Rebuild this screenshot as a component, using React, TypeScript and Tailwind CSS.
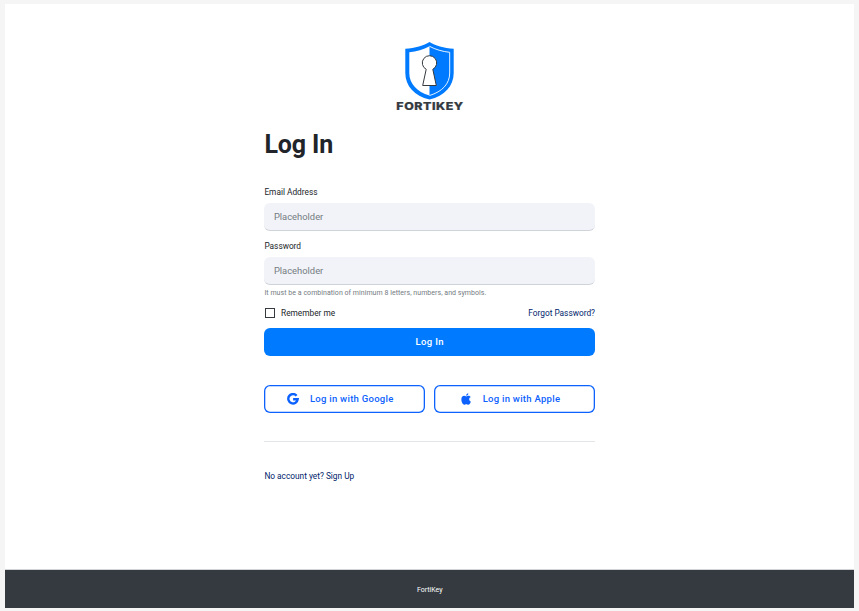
import React from "react";

function Logo() {
  return (
    <svg width="70" height="72" viewBox="0 0 70 72" role="img" aria-label="FORTIKEY">
      <path d="M34.5 2C29 5.5 20 8.2 10.3 8.8V33C10.3 46 19.5 55.8 34.5 59.6C49.500 55.800 58.700 46 58.700 33V8.800C49 8.200 40 5.500 34.500 2Z" fill="#007bff" />
      <path d="M34.500 6.300C28.500 9.500 21.500 11.600 14.300 12.300V33C14.300 43.800 21.800 51.700 34.500 55.500Z" fill="#fff" />
      <path d="M34.500 6.300C40.500 9.500 47.500 11.600 54.700 12.300V33C54.700 43.800 47.200 51.700 34.500 55.500" fill="none" stroke="#fff" strokeWidth="0.9" />
      <path d="M31.200 29.300A7.200 7.200 0 1 1 37.800 29.300L41.300 45.500H27.700Z" fill="#fff" stroke="#343a40" strokeWidth="1" />
      <text x="1.200" y="70" transform="scale(1.15 1)" textLength="58" lengthAdjust="spacing" fill="#343a40" stroke="#343a40" strokeWidth="0.25" className="font-['Inter',sans-serif] text-[10.800px] font-extrabold">FORTIKEY</text>
    </svg>
  );
}

function GoogleIcon() {
  return (
    <svg width="12" height="12" viewBox="0 0 12 12" fill="none" stroke="#0d62fe" strokeWidth="2.400">
      <path d="M9.600 2.700A4.700 4.700 0 1 0 10.700 6.200H6.100" />
    </svg>
  );
}

function AppleIcon() {
  return (
    <svg width="10.500" height="12" viewBox="0 0 11 13" fill="#0d62fe">
      <path d="M8.700 6.800c0-1.200.7-1.900 1.600-2.400C9.700 3.500 8.800 3.100 7.800 3.100c-1 0-1.700.6-2.300.6S4 3.100 3.200 3.100C1.500 3.100.2 4.600.2 7c0 2.600 1.600 5.600 3.200 5.600.8 0 1.200-.5 2.200-.5s1.300.5 2.100.5c1.300 0 2.300-1.700 2.800-3.200-1-.4-1.800-1.300-1.800-2.600Z" />
      <path d="M5.300 3C5.200 1.600 6.300.4 7.700.2 7.900 1.700 6.800 3 5.300 3Z" />
    </svg>
  );
}

function Field({ id, label, type }: { id: string; label: string; type: string }) {
  return (
    <div>
      <label htmlFor={id} className="block h-[17px] text-[8.300px] leading-[12px] text-[#212529]">{label}</label>
      <input id={id} type={type} placeholder="Placeholder" className="block h-7 w-full rounded-md border-b border-[#ced4da] bg-[#f1f3f8] px-[9.500px] pb-px text-[9.400px] outline-none placeholder:text-[#747b82]" />
    </div>
  );
}

export default function App() {
  return (
    <div className="flex h-[611px] w-[859px] flex-col bg-[#f5f5f5] pt-1 pr-[4.600px] pb-[3px] pl-[5px] font-['Roboto',sans-serif]">
      <main className="flex-1 bg-white pl-[259.400px]">
        <div className="flex w-[330.600px] flex-col">
          <div className="flex h-[123px] justify-center pt-9"><Logo /></div>
          <h1 className="h-[59px] text-[25px] leading-[36px] font-bold tracking-[-0.100px] text-[#212529]">Log In</h1>
          <Field id="email" label="Email Address" type="email" />
          <div className="h-[9px]" />
          <Field id="password" label="Password" type="password" />
          <p className="mt-[3px] h-[17px] text-[7px] leading-[10px] tracking-[0.040px] text-[#747b82]">It must be a combination of minimum 8 letters, numbers, and symbols.</p>
          <div className="flex h-[23px] items-start justify-between text-[8.300px] leading-[16px] text-[#212529]">
            <label className="flex items-center">
              <input type="checkbox" className="mr-[6.100px] ml-[0.600px] h-[10px] w-[10px] appearance-none border border-[#343a40]" />
              Remember me
            </label>
            <a href="#" className="text-[#001d6c]">Forgot Password?</a>
          </div>
          <button className="h-[28.400px] rounded-md bg-[#007bff] text-[9.500px] font-medium tracking-[0.350px] text-white">Log In</button>
          <div className="mt-[28.600px] grid grid-cols-2 gap-[9.500px] text-[9.500px] font-medium tracking-[0.270px] text-[#0d62fe]">
            <button className="flex h-7 items-center rounded-md pl-[23px] shadow-[inset_0_0_0_1.300px_#0d62fe]"><GoogleIcon /><span className="ml-[10.500px]">Log in with Google</span></button>
            <button className="flex h-7 items-center rounded-md pl-[26.700px] shadow-[inset_0_0_0_1.300px_#0d62fe]"><AppleIcon /><span className="ml-[11px]">Log in with Apple</span></button>
          </div>
          <div className="mt-7 border-t border-[#e3e5e8]" />
          <a href="#" className="mt-7 text-[8.300px] leading-[12px] text-[#001d6c]">No account yet? Sign Up</a>
        </div>
      </main>
      <footer className="flex h-[39px] shrink-0 items-center justify-center border-t border-[#d1d3d5] bg-[#343a40] pt-0.5 text-[7px] text-white">FortiKey</footer>
    </div>
  );
}
